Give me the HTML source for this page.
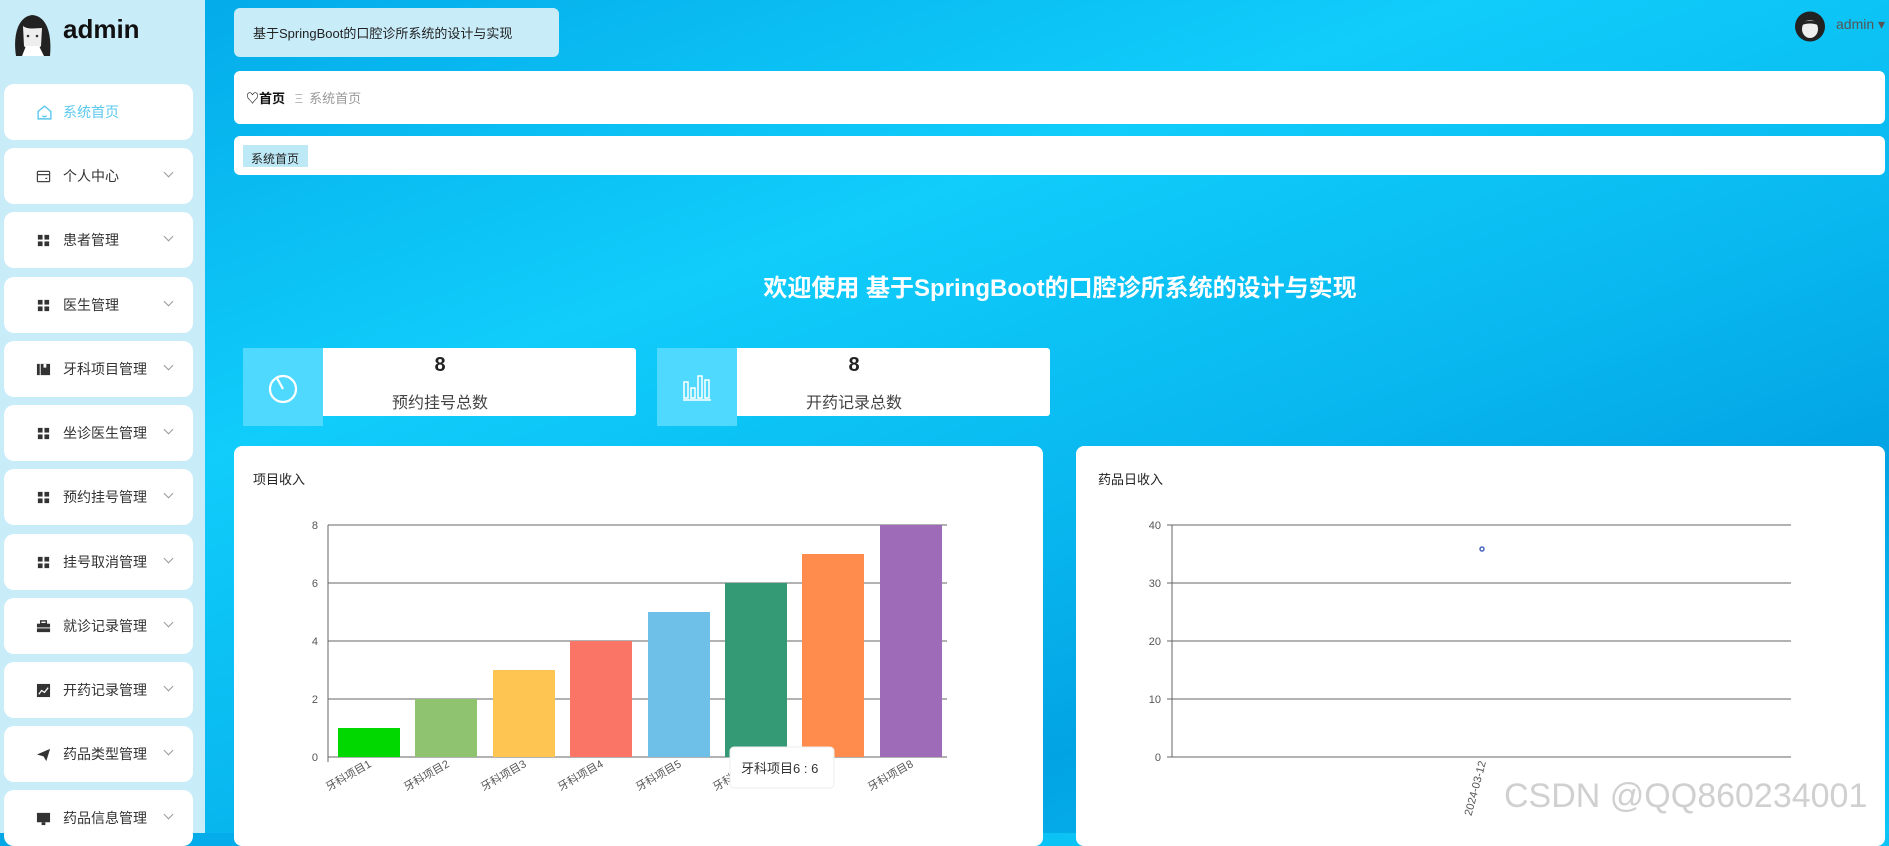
<!DOCTYPE html>
<html><head><meta charset="utf-8">
<style>
*{margin:0;padding:0;box-sizing:border-box}
body{width:1889px;height:833px;overflow:hidden;position:relative;font-family:"Liberation Sans","Noto Sans CJK SC",sans-serif;background:linear-gradient(160deg,#02a6e6 0%,#10cdfb 35%,#08b6ee 60%,#02a3e3 75%,#0cc6f8 100%)}
.side{position:absolute;left:0;top:0;width:205px;height:833px;background:#c9ecf9}
.mi{position:absolute;left:4px;width:189px;height:56px;background:#fff;border-radius:10px;font-size:14px;color:#333}
.mi .ic{position:absolute;left:32px;top:21px;width:15px;height:15px}
.mi .tx{position:absolute;left:59px;top:18px}
.mi .ch{position:absolute;left:161px;top:21px;width:7px;height:7px;border-right:1px solid #999;border-bottom:1px solid #999;transform:rotate(45deg)}
.abs{position:absolute}
.box{position:absolute;background:#fff;border-radius:6px}
</style></head><body>
<div class="side">
<svg class="abs" style="left:12px;top:12px" width="41" height="44" viewBox="0 0 41 44"><rect width="41" height="44" fill="#c9ecf9"/><path d="M4 44 C1 25 5 5 20 3 C35 4 40 22 38 44 Z" fill="#222"/><path d="M11 14 C16 10 26 10 30 16 L29 34 C25 39 16 39 12 34Z" fill="#eee"/><path d="M11 14 C16 18 24 16 30 16 L30 11 C24 7 15 7 11 14Z" fill="#222"/><circle cx="16" cy="24" r="1.3" fill="#333"/><circle cx="25" cy="24" r="1.3" fill="#333"/><path d="M10 44 L14 34 L27 34 L32 44Z" fill="#fff"/></svg>
<div class="abs" style="left:63px;top:14px;font-size:26px;font-weight:bold;color:#111">admin</div>
<div class="mi" style="top:84px;color:#5bc8ee"><svg class="ic" viewBox="0 0 16 16" style="top:20px;width:17px;height:17px"><path d="M2 7 L8 2 L14 7 V14 H2Z M6 11 Q8 13 10 11" fill="none" stroke="#5bc8ee" stroke-width="1.3"/></svg><span class="tx">系统首页</span></div>
<div class="mi" style="top:148px"><svg class="ic" viewBox="0 0 16 16"><rect x="1.5" y="2.5" width="13" height="11" rx="1" fill="none" stroke="#444" stroke-width="1.3"/><line x1="1.5" y1="6" x2="14.5" y2="6" stroke="#444" stroke-width="1.3"/><line x1="10" y1="10" x2="12" y2="10" stroke="#444" stroke-width="1.3"/></svg><span class="tx">个人中心</span><i class="ch"></i></div>
<div class="mi" style="top:212px"><svg class="ic" viewBox="0 0 16 16" fill="#333"><rect x="2" y="2" width="5" height="5"/><rect x="9" y="2" width="5" height="5"/><rect x="2" y="9" width="5" height="5"/><rect x="9" y="9" width="5" height="5"/></svg><span class="tx">患者管理</span><i class="ch"></i></div>
<div class="mi" style="top:277px"><svg class="ic" viewBox="0 0 16 16" fill="#333"><rect x="2" y="2" width="5" height="5"/><rect x="9" y="2" width="5" height="5"/><rect x="2" y="9" width="5" height="5"/><rect x="9" y="9" width="5" height="5"/></svg><span class="tx">医生管理</span><i class="ch"></i></div>
<div class="mi" style="top:341px"><svg class="ic" viewBox="0 0 16 16" fill="#333"><rect x="1" y="2" width="3" height="12"/><rect x="5" y="2" width="10" height="12"/><rect x="8" y="2" width="3" height="4" fill="#fff"/></svg><span class="tx">牙科项目管理</span><i class="ch"></i></div>
<div class="mi" style="top:405px"><svg class="ic" viewBox="0 0 16 16" fill="#333"><rect x="2" y="2" width="5" height="5"/><rect x="9" y="2" width="5" height="5"/><rect x="2" y="9" width="5" height="5"/><rect x="9" y="9" width="5" height="5"/></svg><span class="tx">坐诊医生管理</span><i class="ch"></i></div>
<div class="mi" style="top:469px"><svg class="ic" viewBox="0 0 16 16" fill="#333"><rect x="2" y="2" width="5" height="5"/><rect x="9" y="2" width="5" height="5"/><rect x="2" y="9" width="5" height="5"/><rect x="9" y="9" width="5" height="5"/></svg><span class="tx">预约挂号管理</span><i class="ch"></i></div>
<div class="mi" style="top:534px"><svg class="ic" viewBox="0 0 16 16" fill="#333"><rect x="2" y="2" width="5" height="5"/><rect x="9" y="2" width="5" height="5"/><rect x="2" y="9" width="5" height="5"/><rect x="9" y="9" width="5" height="5"/></svg><span class="tx">挂号取消管理</span><i class="ch"></i></div>
<div class="mi" style="top:598px"><svg class="ic" viewBox="0 0 16 16" fill="#333"><rect x="5" y="2" width="6" height="3" fill="none" stroke="#333" stroke-width="1.5"/><rect x="1" y="5" width="14" height="4"/><rect x="1" y="10" width="14" height="4"/></svg><span class="tx">就诊记录管理</span><i class="ch"></i></div>
<div class="mi" style="top:662px"><svg class="ic" viewBox="0 0 16 16"><rect x="1" y="1" width="14" height="14" fill="#333"/><path d="M3 12 L6 8 L9 10 L13 5" stroke="#fff" stroke-width="1.3" fill="none"/></svg><span class="tx">开药记录管理</span><i class="ch"></i></div>
<div class="mi" style="top:726px"><svg class="ic" viewBox="0 0 16 16" fill="#333"><path d="M1 8 L15 2 L11 15 L8 10Z"/></svg><span class="tx">药品类型管理</span><i class="ch"></i></div>
<div class="mi" style="top:790px"><svg class="ic" viewBox="0 0 16 16" fill="#333"><rect x="1" y="2" width="14" height="10"/><rect x="6" y="12" width="4" height="3"/></svg><span class="tx">药品信息管理</span><i class="ch"></i></div>
</div>

<div class="abs" style="left:234px;top:8px;width:325px;height:49px;background:#c9ecf9;border-radius:6px;font-size:13px;color:#222;padding:15px 0 0 19px">基于SpringBoot的口腔诊所系统的设计与实现</div>
<svg class="abs" style="left:1795px;top:11px" width="30" height="31" viewBox="0 0 30 31"><circle cx="15" cy="15.5" r="15" fill="#222"/><ellipse cx="15" cy="18" rx="8" ry="9" fill="#eee"/><path d="M7 14 C10 8 20 8 23 14 C18 12 12 12 7 14Z" fill="#222"/></svg>
<div class="abs" style="left:1836px;top:16px;font-size:14px;color:#555">admin ▾</div>

<div class="box" style="left:234px;top:71px;width:1651px;height:53px"><div class="abs" style="left:12px;top:17px;font-size:13px;color:#111;font-weight:bold">♡首页 <span style="color:#bbb;font-weight:normal;margin:0 6px">Ξ</span><span style="color:#999;font-weight:normal">系统首页</span></div></div>
<div class="box" style="left:234px;top:136px;width:1651px;height:39px"><div class="abs" style="left:9px;top:9px;width:65px;height:22px;background:#bde9f7;font-size:12px;color:#222;padding:7px 0 0 8px;line-height:15px">系统首页</div></div>

<div class="abs" style="left:0;width:2120px;top:268px;text-align:center;font-size:24px;font-weight:bold;color:#fff">欢迎使用 基于SpringBoot的口腔诊所系统的设计与实现</div>

<div class="box" style="left:243px;top:348px;width:393px;height:68px;border-radius:3px"></div>
<div class="abs" style="left:243px;top:348px;width:80px;height:78px;background:#50d9ff"><svg class="abs" style="left:24px;top:24px" width="32" height="32" viewBox="0 0 32 32"><circle cx="16" cy="17" r="13" fill="none" stroke="#fff" stroke-width="2.2"/><path d="M10 6 L16 17" stroke="#fff" stroke-width="2.2"/></svg></div>
<div class="abs" style="left:323px;top:354px;width:234px;text-align:center;font-size:20px;font-weight:bold;color:#222">8</div>
<div class="abs" style="left:323px;top:389px;width:234px;text-align:center;font-size:16px;color:#444">预约挂号总数</div>

<div class="box" style="left:657px;top:348px;width:393px;height:68px;border-radius:3px"></div>
<div class="abs" style="left:657px;top:348px;width:80px;height:78px;background:#50d9ff"><svg class="abs" style="left:24px;top:24px" width="32" height="30" viewBox="0 0 32 30" fill="none" stroke="#fff" stroke-width="1.5"><path d="M2 28 H30"/><rect x="3" y="10" width="4" height="16"/><rect x="10" y="16" width="4" height="10"/><rect x="17" y="4" width="4" height="22"/><rect x="24" y="8" width="4" height="18"/></svg></div>
<div class="abs" style="left:737px;top:354px;width:234px;text-align:center;font-size:20px;font-weight:bold;color:#222">8</div>
<div class="abs" style="left:737px;top:389px;width:234px;text-align:center;font-size:16px;color:#444">开药记录总数</div>

<div class="box" style="left:234px;top:446px;width:809px;height:400px;border-radius:8px">
<div class="abs" style="left:19px;top:23px;font-size:13px;color:#222">项目收入</div>
</div>
<svg class="abs" style="left:234px;top:446px" width="809" height="387" font-family="Liberation Sans, Noto Sans CJK SC, sans-serif" font-size="11" fill="#555">
<g stroke="#666" stroke-width="1"><line x1="94" y1="79" x2="713" y2="79"/><line x1="94" y1="137" x2="713" y2="137"/><line x1="94" y1="195" x2="713" y2="195"/><line x1="94" y1="253" x2="713" y2="253"/><line x1="94" y1="311" x2="713" y2="311"/><line x1="94" y1="79" x2="94" y2="316"/></g>
<g text-anchor="end"><text x="84" y="83">8</text><text x="84" y="141">6</text><text x="84" y="199">4</text><text x="84" y="257">2</text><text x="84" y="315">0</text></g>
<rect x="104" y="282" width="62" height="29" fill="#00d800"/>
<rect x="181" y="253" width="62" height="58" fill="#8fc370"/>
<rect x="259" y="224" width="62" height="87" fill="#ffc553"/>
<rect x="336" y="195" width="62" height="116" fill="#fa7566"/>
<rect x="414" y="166" width="62" height="145" fill="#6fc0e8"/>
<rect x="491" y="137" width="62" height="174" fill="#349a75"/>
<rect x="568" y="108" width="62" height="203" fill="#ff8c4c"/>
<rect x="646" y="79" width="62" height="232" fill="#9e6bb8"/>
<g text-anchor="end"><text transform="translate(138,320) rotate(-30)">牙科项目1</text><text transform="translate(216,320) rotate(-30)">牙科项目2</text><text transform="translate(293,320) rotate(-30)">牙科项目3</text><text transform="translate(370,320) rotate(-30)">牙科项目4</text><text transform="translate(448,320) rotate(-30)">牙科项目5</text><text transform="translate(525,320) rotate(-30)">牙科项目6</text><text transform="translate(680,320) rotate(-30)">牙科项目8</text></g>
<rect x="496" y="301" width="104" height="41" rx="4" fill="#fff" stroke="#eee"/>
<text x="507" y="327" font-size="13" fill="#333">牙科项目6 : 6</text>
</svg>

<div class="box" style="left:1076px;top:446px;width:809px;height:400px;border-radius:8px">
<div class="abs" style="left:22px;top:23px;font-size:13px;color:#222">药品日收入</div>
</div>
<svg class="abs" style="left:1076px;top:446px" width="809" height="387" font-family="Liberation Sans, sans-serif" font-size="11" fill="#555">
<g stroke="#666" stroke-width="1"><line x1="91" y1="79" x2="715" y2="79"/><line x1="91" y1="137" x2="715" y2="137"/><line x1="91" y1="195" x2="715" y2="195"/><line x1="91" y1="253" x2="715" y2="253"/><line x1="91" y1="311" x2="715" y2="311"/><line x1="96" y1="79" x2="96" y2="311"/></g>
<g text-anchor="end"><text x="85" y="83">40</text><text x="85" y="141">30</text><text x="85" y="199">20</text><text x="85" y="257">10</text><text x="85" y="315">0</text></g>
<circle cx="406" cy="103" r="2" fill="none" stroke="#4a68c0" stroke-width="1.5"/>
<text transform="translate(410,316) rotate(-75)" text-anchor="end">2024-03-12</text>
</svg>
<div class="abs" style="left:1504px;top:777px;font-size:34px;color:rgba(200,200,200,0.85);font-family:'Liberation Sans',sans-serif">CSDN @QQ860234001</div>
</body></html>
